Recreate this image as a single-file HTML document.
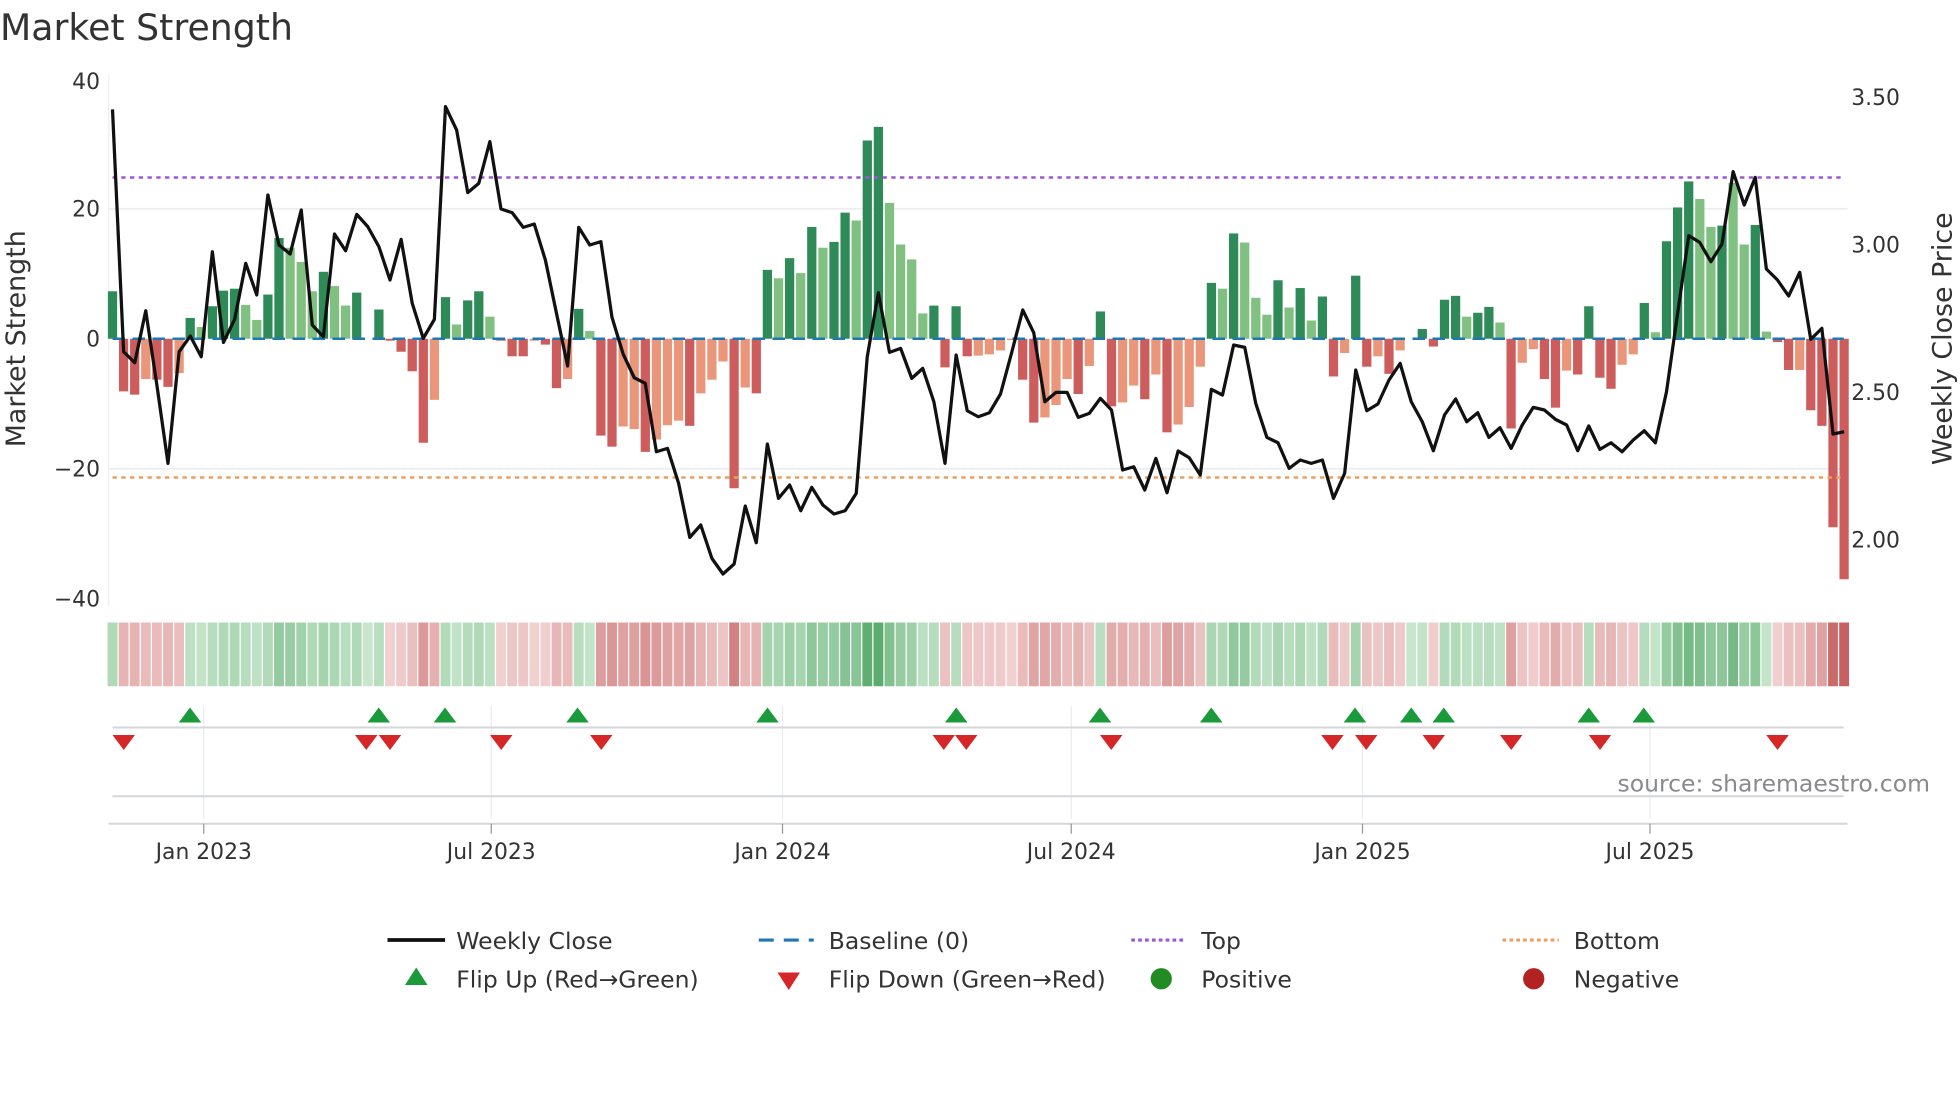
<!DOCTYPE html>
<html><head><meta charset="utf-8"><style>
html,body{margin:0;padding:0;background:#fff;width:1960px;height:1102px;overflow:hidden}
svg{display:block}
text{font-family:"DejaVu Sans","Liberation Sans",sans-serif;fill:#333}
</style></head><body>
<svg id="s" width="1960" height="1102" viewBox="0 0 1568 881.6" xmlns="http://www.w3.org/2000/svg">
<text x="0" y="32" font-size="29">Market Strength</text>
<g font-size="17.5" text-anchor="end">
<text x="80" y="71">40</text><text x="80" y="173">20</text><text x="80" y="277">0</text><text x="80" y="381">−20</text><text x="80" y="485">−40</text>
</g>
<g font-size="17.5">
<text x="1481" y="84">3.50</text><text x="1481" y="202">3.00</text><text x="1481" y="320">2.50</text><text x="1481" y="438">2.00</text>
</g>
<text font-size="21.5" transform="translate(20,271) rotate(-90)" text-anchor="middle">Market Strength</text>
<text font-size="21.5" transform="translate(1561,271) rotate(-90)" text-anchor="middle">Weekly Close Price</text>
<line x1="87" y1="60" x2="87" y2="485" stroke="#eee" stroke-width="1"/>
<line x1="87" y1="167" x2="1478" y2="167" stroke="#eceef0" stroke-width="1.5"/>
<line x1="87" y1="375" x2="1478" y2="375" stroke="#eceef0" stroke-width="1.5"/>
<g id="bars"></g>
<line x1="90" y1="271" x2="1475" y2="271" stroke="#1f77b4" stroke-width="2" stroke-dasharray="10 6"/>
<line x1="90" y1="142" x2="1475" y2="142" stroke="#9b59d0" stroke-width="2" stroke-dasharray="3.5 3.5"/>
<line x1="90" y1="382" x2="1475" y2="382" stroke="#eba060" stroke-width="2" stroke-dasharray="3.5 3.5"/>
<polyline id="price" fill="none" stroke="#111" stroke-width="2.6" stroke-linejoin="round"/>
<g id="strip"></g>
<g stroke="#e8ecef" stroke-width="1">
<line x1="163" y1="565" x2="163" y2="655"/><line x1="393" y1="565" x2="393" y2="655"/><line x1="626" y1="565" x2="626" y2="655"/><line x1="857" y1="565" x2="857" y2="655"/><line x1="1090" y1="565" x2="1090" y2="655"/><line x1="1320" y1="565" x2="1320" y2="655"/>
</g>
<line x1="90" y1="582" x2="1475" y2="582" stroke="#d4d6da" stroke-width="1.6"/>
<line x1="90" y1="637" x2="1475" y2="637" stroke="#d4d6da" stroke-width="1.6"/>
<line x1="87" y1="659" x2="1478" y2="659" stroke="#d4d6da" stroke-width="1.6"/>
<g stroke="#999" stroke-width="1">
<line x1="163" y1="659" x2="163" y2="667"/><line x1="393" y1="659" x2="393" y2="667"/><line x1="626" y1="659" x2="626" y2="667"/><line x1="857" y1="659" x2="857" y2="667"/><line x1="1090" y1="659" x2="1090" y2="667"/><line x1="1320" y1="659" x2="1320" y2="667"/>
</g>
<g id="marks"></g>
<text x="1544" y="633" font-size="18.8" text-anchor="end" style="fill:#8a8a8a">source: sharemaestro.com</text>
<g font-size="17.5" text-anchor="middle">
<text x="163" y="687">Jan 2023</text><text x="393" y="687">Jul 2023</text><text x="626" y="687">Jan 2024</text><text x="857" y="687">Jul 2024</text><text x="1090" y="687">Jan 2025</text><text x="1320" y="687">Jul 2025</text>
</g>
<g font-size="18.8">
<line x1="310" y1="752" x2="356" y2="752" stroke="#111" stroke-width="3"/>
<text x="365" y="759">Weekly Close</text>
<line x1="607" y1="752" x2="651" y2="752" stroke="#1f77b4" stroke-width="2.5" stroke-dasharray="12 8"/>
<text x="663" y="759">Baseline (0)</text>
<line x1="905" y1="752" x2="948" y2="752" stroke="#9b59d0" stroke-width="2.5" stroke-dasharray="3 2.5"/>
<text x="961" y="759">Top</text>
<line x1="1202" y1="752" x2="1247" y2="752" stroke="#eba060" stroke-width="2.5" stroke-dasharray="3 2.5"/>
<text x="1259" y="759">Bottom</text>
<polygon points="324,788 342,788 333,774" fill="#1a9a3a"/>
<text x="365" y="790">Flip Up (Red→Green)</text>
<polygon points="622,778 640,778 631,792" fill="#d62728"/>
<text x="663" y="790">Flip Down (Green→Red)</text>
<circle cx="929" cy="783" r="8.5" fill="#228b22"/>
<text x="961" y="790">Positive</text>
<circle cx="1227" cy="783" r="8.5" fill="#b22222"/>
<text x="1259" y="790">Negative</text>
</g>
</svg>
<script>
var d="7.3D -8.1R -8.6R -6.2O -6.3R -7.4R -5.3O 3.2D 1.8L 5D 7.4D 7.7D 5.2L 2.9L 6.8D 15.5D 14L 11.8L 7.3L 10.3D 8.1L 5.1L 7.1D 0D 4.5D -0.3R -2R -5R -16R -9.4O 6.4D 2.2L 5.9D 7.3D 3.4L -0.3R -2.7R -2.7R -0.3O -0.9R -7.6R -6.2O 4.6D 1.2L -14.9R -16.6R -13.5O -13.9O -17.4R -15.5O -13.3O -12.6O -13.4R -8.4O -6.3O -3.5O -23R -7.5O -8.4R 10.6D 9.3L 12.4D 10.1L 17.2D 14L 14.9D 19.4D 18.2L 30.5D 32.6D 20.9L 14.5L 12.2L 3.9L 5.1D -4.4R 5D -2.7R -2.6O -2.4O -1.8O -0.2O -6.3R -12.9R -12.1O -10.2O -6.2O -8.5R -4.2O 4.2D -10.4R -9.8O -7.2O -9.3R -5.5O -14.4R -13.2O -10.5O -4.3O 8.6D 7.7L 16.2D 14.8L 6.3L 3.7L 9D 4.8L 7.8D 2.8L 6.5D -5.8R -2.2O 9.7D -4.3R -2.7O -5.4R -1.8O 0D 1.5D -1.2R 6D 6.6D 3.4L 4D 4.9D 2.5L -13.8R -3.7O -1.6O -6.2R -10.6R -4.9O -5.5R 5D -6R -7.7R -4O -2.4O 5.5D 1L 15D 20.2D 24.2D 21.5L 17.2L 17.4D 24L 14.5L 17.5D 1.1L -0.5R -4.8R -4.8O -11R -13.4R -29R -37R".split(" ");
var p=[88,815,848,692,915,1150,815,768,830,515,787,718,550,645,345,495,522,390,735,770,462,512,403,440,500,600,478,670,775,718,80,150,338,310,185,387,398,442,432,540,700,858,442,495,485,712,822,893,910,1115,1105,1210,1372,1335,1435,1482,1452,1278,1388,1092,1255,1215,1292,1222,1275,1302,1292,1240,830,638,817,805,895,865,965,1150,825,992,1010,998,942,818,690,758,965,937,937,1012,1000,955,990,1170,1160,1230,1135,1238,1113,1133,1185,928,945,795,802,970,1072,1088,1165,1140,1150,1140,1255,1180,870,992,972,900,850,965,1025,1112,1005,957,1025,998,1072,1043,1105,1035,982,990,1018,1035,1112,1038,1108,1088,1115,1080,1052,1088,935,700,467,487,545,492,275,375,292,567,600,648,577,778,745,1062,1055];
var NS="http://www.w3.org/2000/svg";
function el(t,a,par){var e=document.createElementNS(NS,t);for(var k in a)e.setAttribute(k,a[k]);document.getElementById(par).appendChild(e);return e;}
var col={D:"#2e8b57",L:"#80c080",R:"#cd5c5c",O:"#e9967a"};
function mix(c1,c2,t){var r=[];for(var i=0;i<3;i++)r.push(Math.round(c1[i]+(c2[i]-c1[i])*t));return "rgb("+r.join(",")+")";}
var pts=[];
for(var i=0;i<d.length;i++){
 var v=parseFloat(d[i]),ty=d[i].slice(-1),x=90+i*8.88;
 if(Math.abs(v)>0.05){var y0=271,y1=271-5.2*v;el("rect",{x:x-3.7,y:Math.min(y0,y1),width:7.4,height:Math.abs(y1-y0),fill:col[ty]},"bars");}
 var t=Math.min(Math.abs(v)/32,1),c;
 if(v>=0)c=mix([214,238,218],[70,160,90],0.1+0.75*t);else c=mix([246,222,222],[196,90,90],0.1+0.85*t);
 el("rect",{x:x-4.44+0.5,y:498,width:7.9,height:51,fill:c},"strip");
 if(i<p.length)pts.push(x.toFixed(1)+","+(64+p[i]*0.2667).toFixed(1));
}
document.getElementById("price").setAttribute("points",pts.join(" "));
[152,303,356,462,614,765,880,969,1084,1129,1155,1271,1315].forEach(function(x){el("polygon",{points:(x-9)+",578 "+(x+9)+",578 "+x+",566",fill:"#1a9a3a"},"marks");});
[99,293,312,401,481,755,773,889,1066,1093,1147,1209,1280,1422].forEach(function(x){el("polygon",{points:(x-9)+",588 "+(x+9)+",588 "+x+",600",fill:"#d62728"},"marks");});
</script>
</body></html>
